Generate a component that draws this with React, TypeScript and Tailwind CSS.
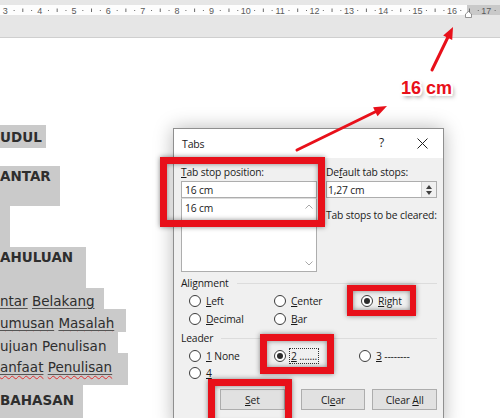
import React from "react";

const RED = "#e8101a";

function Radio({ checked, children }: { checked?: boolean; children?: React.ReactNode }) {
  return (
    <div className="flex items-center gap-[5px] h-[18px] whitespace-nowrap">
      <span className="w-[12px] h-[12px] rounded-full border border-[#3c3c3c] bg-white flex items-center justify-center shrink-0">
        {checked && <span className="w-[6px] h-[6px] rounded-full bg-[#2b2b2b]" />}
      </span>
      {children}
    </div>
  );
}

function GroupLabel({ children }: { children: React.ReactNode }) {
  return (
    <div className="flex items-center gap-[8px] h-[14px]">
      <span>{children}</span>
      <span className="flex-1 h-px bg-[#dcdcdc]" />
    </div>
  );
}

function Ruler() {
  const nums = Array.from({ length: 15 }, (_, i) => i + 3);
  const x = (n: number) => 5.3 + (n - 3) * 34.36;
  return (
    <svg width="500" height="14" className="block">
      <rect x="0" y="0" width="467" height="10" fill="#fdfdfd" />
      <rect x="467" y="0" width="33" height="10" fill="#c9c9c9" />
      {nums.map((n) => (
        <text key={n} x={x(n)} y="8.5" textAnchor="middle" fontSize="9" fill="#5a5a5a" fontFamily="Liberation Sans, Arial, sans-serif">
          {n}
        </text>
      ))}
      {nums.map((n) => (
        <g key={"m" + n}>
          <rect x={x(n) + 8.3} y="5" width="1" height="1" fill="#6a6a6a" />
          <rect x={x(n) + 17} y="3.5" width="1" height="3.5" fill="#6a6a6a" />
          <rect x={x(n) + 25.8} y="5" width="1" height="1" fill="#6a6a6a" />
        </g>
      ))}
      <path d="M465.5 12.5 L465.5 9 L468.5 6.5 L471.5 9 L471.5 12.5 Z" fill="#fff" stroke="#7a7a7a" strokeWidth="0.8" />
    </svg>
  );
}

function Spell({ children }: { children: React.ReactNode }) {
  return (
    <span className="underline decoration-[#555] underline-offset-[2px]">
      <span className="underline decoration-wavy decoration-[#e03030] underline-offset-[3px] decoration-1">{children}</span>
    </span>
  );
}

export default function App() {
  return (
    <div className="relative w-[500px] h-[418px] overflow-hidden bg-white font-['DejaVu_Sans',sans-serif]">
      {/* Ruler band */}
      <div className="h-[38px] bg-[#e6e6e6] border-b border-[#cfcfcf] pt-[5px]">
        <Ruler />
      </div>

      {/* Document text (table of contents, cut at the left) */}
      <div className="flex flex-col text-[#2e2e2e] text-[13.5px] leading-[20px] whitespace-nowrap">
        <div className="mt-[87px] w-[46px] h-[23px] bg-[#cacaca] pt-[2px] font-bold">UDUL</div>
        <div className="mt-[18px] w-[60px] h-[40px] bg-[#cacaca] font-bold">ANTAR</div>
        <div className="w-[10px] h-[41px] bg-[#cacaca]" />
        <div className="w-[86px] h-[41px] bg-[#cacaca] font-bold">AHULUAN</div>
        <div className="w-[104px] h-[21px] bg-[#cacaca] pt-[3px]">
          <Spell>ntar</Spell> <Spell>Belakang</Spell>
        </div>
        <div className="w-[126px] h-[23px] bg-[#cacaca] pt-[4px]">
          <Spell>umusan</Spell> <Spell>Masalah</Spell>
        </div>
        <div className="w-[118px] h-[21px] bg-[#cacaca] pt-[4px]">
          <Spell>ujuan</Spell> <Spell>Penulisan</Spell>
        </div>
        <div className="w-[128px] h-[32px] bg-[#cacaca] pt-[4px]">
          <Spell>anfaat</Spell> <Spell>Penulisan</Spell>
        </div>
        <div className="w-[83px] h-[40px] bg-[#cacaca] pt-[5px] font-bold">BAHASAN</div>
      </div>

      {/* Tabs dialog */}
      <div className="absolute left-[173px] top-[128px] w-[271px] h-[300px] border border-[#8f8f8f] bg-[#f0f0f0] shadow-[0_0_18px_rgba(0,0,0,0.28)] font-['Open_Sans',sans-serif] text-[10.3px] tracking-[-0.15px] text-[#1b1b1b] leading-[14px]">
        <div className="h-[29px] bg-white flex items-center pl-[8px] relative text-[10.5px]">
          <span>Tabs</span>
          <span className="absolute left-[205px] top-[7px] text-[12px]">?</span>
          <svg className="absolute left-[243px] top-[9px]" width="11" height="11">
            <path d="M0.5 0.5 L10.5 10.5 M10.5 0.5 L0.5 10.5" stroke="#222" strokeWidth="1" />
          </svg>
        </div>

        <div className="pl-[7px] pr-[6px] pt-[7px]">
          <div className="flex gap-[9px]">
            <div className="w-[136px] shrink-0">
              <div className="h-[14px]">
                <u>T</u>ab stop position:
              </div>
              <div className="mt-[2px] h-[17px] border border-[#adadad] bg-white pl-[3px] flex items-center">16 cm</div>
              <div className="h-[74px] border border-[#adadad] border-t-[#dcdcdc] bg-white flex">
                <div className="flex-1 pl-[3px] pt-[2px]">16 cm</div>
                <div className="w-[15px] flex flex-col items-center justify-between py-[5px]">
                  <svg width="8" height="5">
                    <path d="M0.5 4.5 L4 1 L7.5 4.5" fill="none" stroke="#a8a8a8" strokeWidth="1" />
                  </svg>
                  <svg width="8" height="5">
                    <path d="M0.5 0.5 L4 4 L7.5 0.5" fill="none" stroke="#a8a8a8" strokeWidth="1" />
                  </svg>
                </div>
              </div>
            </div>
            <div className="flex-1 min-w-0">
              <div className="h-[14px] whitespace-nowrap">
                De<u>f</u>ault tab stops:
              </div>
              <div className="mt-[2px] h-[17px] border border-[#adadad] bg-white flex">
                <span className="flex-1 pl-[1px] flex items-center">1,27 cm</span>
                <span className="w-[15px] border-l border-[#d0d0d0] bg-[#f0f0f0] flex flex-col items-center justify-center gap-[2px]">
                  <svg width="6" height="4">
                    <path d="M0 4 L3 0 L6 4 Z" fill="#404040" />
                  </svg>
                  <svg width="6" height="4">
                    <path d="M0 0 L3 4 L6 0 Z" fill="#404040" />
                  </svg>
                </span>
              </div>
              <div className="mt-[10px] h-[14px] whitespace-nowrap">Tab stops to be cleared:</div>
            </div>
          </div>

          <div className="mt-[4px]">
            <GroupLabel>Alignment</GroupLabel>
            <div className="mt-[2px] pl-[8px] grid grid-cols-[85px_87px_1fr]">
              <Radio>
                <span>
                  <u>L</u>eft
                </span>
              </Radio>
              <Radio>
                <span>
                  <u>C</u>enter
                </span>
              </Radio>
              <Radio checked>
                <span>
                  <u>R</u>ight
                </span>
              </Radio>
              <Radio>
                <span>
                  <u>D</u>ecimal
                </span>
              </Radio>
              <Radio>
                <span>
                  <u>B</u>ar
                </span>
              </Radio>
            </div>
          </div>

          <div className="mt-[3px]">
            <GroupLabel>Leader</GroupLabel>
            <div className="mt-[2px] pl-[8px] grid grid-cols-[85px_85px_1fr] [&>div]:h-[17px]">
              <Radio>
                <span>
                  <u>1</u> None
                </span>
              </Radio>
              <Radio checked>
                <span className="border border-dotted border-[#333] px-[1px] -ml-[2px]">
                  <u>2</u> .......
                </span>
              </Radio>
              <Radio>
                <span>
                  <u>3</u> --------
                </span>
              </Radio>
              <Radio>
                <span>
                  <u>4</u>
                </span>
              </Radio>
            </div>
          </div>

          <div className="mt-[8px] flex ml-[39px] gap-[16px]">
            <button className="w-[65px] h-[21px] border border-[#adadad] bg-[#e1e1e1]">
              <u>S</u>et
            </button>
            <button className="w-[65px] h-[21px] border border-[#adadad] bg-[#e1e1e1]">
              Cl<u>e</u>ar
            </button>
            <button className="w-[65px] h-[21px] border border-[#adadad] bg-[#e1e1e1] -ml-[9px]">
              Clear <u>A</u>ll
            </button>
          </div>
        </div>
      </div>

      {/* Red highlight boxes */}
      <div className="absolute left-[160px] top-[157px] w-[165px] h-[70px] border-[7px] border-[#e8101a] shadow-[0_0_5px_rgba(0,0,0,0.45),inset_0_0_5px_rgba(0,0,0,0.45)]" />
      <div className="absolute left-[347px] top-[285px] w-[69px] h-[31px] border-[6px] border-[#e8101a] shadow-[0_0_5px_rgba(0,0,0,0.45),inset_0_0_5px_rgba(0,0,0,0.45)]" />
      <div className="absolute left-[260px] top-[334px] w-[74px] h-[40px] border-[7px] border-[#e8101a] shadow-[0_0_5px_rgba(0,0,0,0.45),inset_0_0_5px_rgba(0,0,0,0.45)]" />
      <div className="absolute left-[208px] top-[379px] w-[84px] h-[50px] border-[7px] border-[#e8101a] shadow-[0_0_5px_rgba(0,0,0,0.45),inset_0_0_5px_rgba(0,0,0,0.45)]" />

      {/* Arrows */}
      <svg className="absolute left-0 top-0 pointer-events-none" width="500" height="418">
        <line x1="432" y1="70" x2="448.5" y2="36" stroke={RED} strokeWidth="3" strokeLinecap="round" />
        <polygon points="453,27 452.2,40 443.2,35.6" fill={RED} />
        <line x1="297" y1="150" x2="377" y2="111" stroke={RED} strokeWidth="3" strokeLinecap="round" />
        <polygon points="387,106 377.5,116.2 373.1,107.2" fill={RED} />
      </svg>

      {/* Label */}
      <div className="absolute left-[401px] top-[78px] font-['Liberation_Sans',sans-serif] font-bold text-[18px] leading-[21px] text-[#e8101a] [text-shadow:-2px_0_#fff,2px_0_#fff,0_-2px_#fff,0_2px_#fff,-1.5px_-1.5px_#fff,1.5px_1.5px_#fff,-1.5px_1.5px_#fff,1.5px_-1.5px_#fff,2px_3px_4px_rgba(0,0,0,0.5)]">
        16 cm
      </div>
    </div>
  );
}
